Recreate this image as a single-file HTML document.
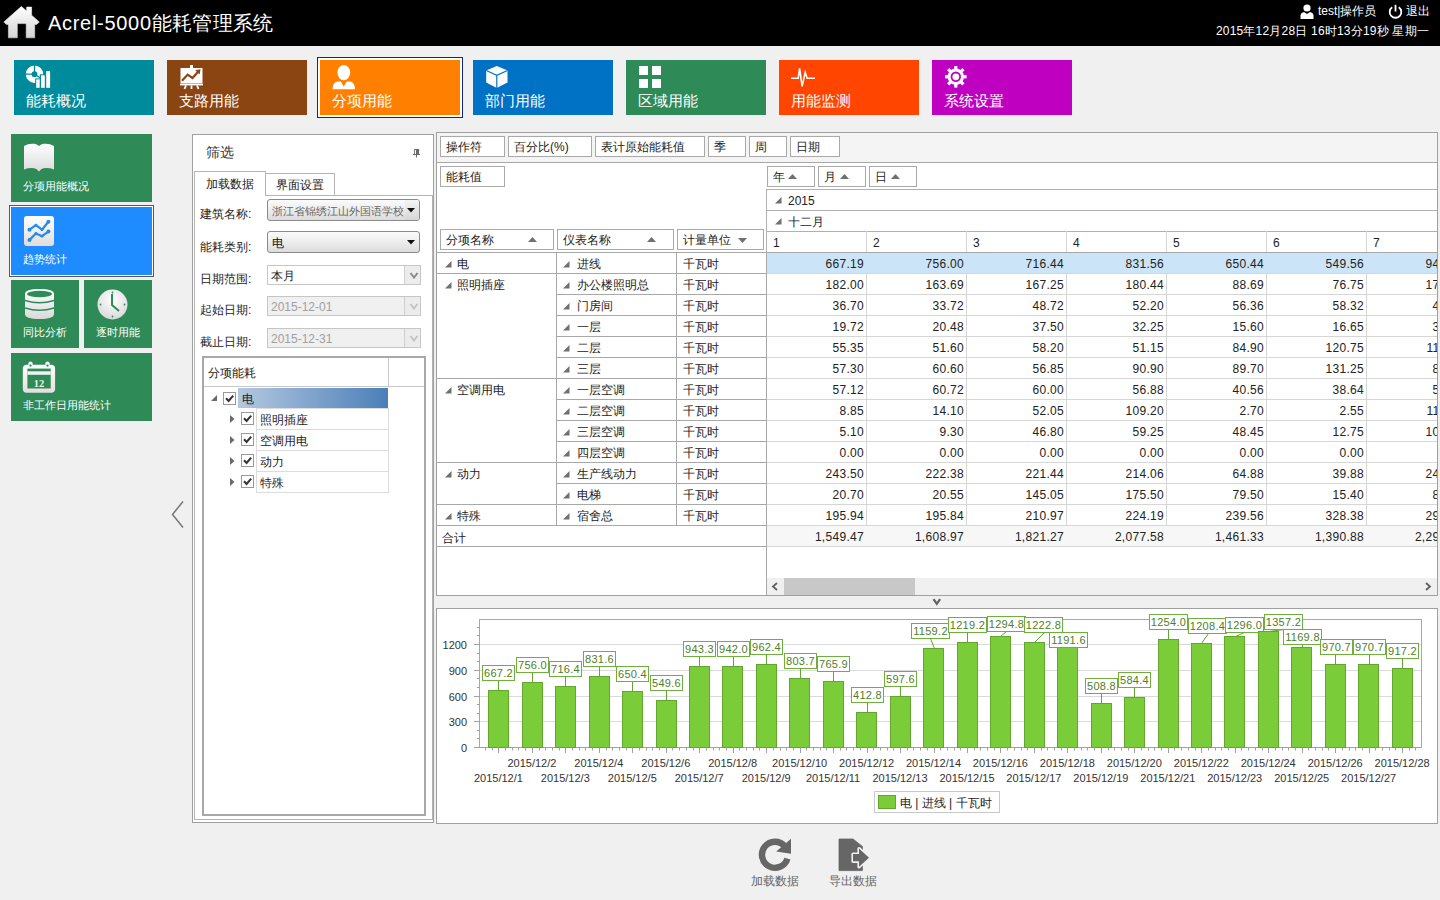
<!DOCTYPE html><html><head><meta charset="utf-8"><style>

*{box-sizing:border-box;margin:0;padding:0}
html,body{width:1440px;height:900px;overflow:hidden;background:#f0f0f0;font-family:"Liberation Sans",sans-serif;color:#222}
.a{position:absolute}
.t{position:absolute;white-space:nowrap;line-height:1}
.tile{position:absolute;width:140px;height:55px}
.tile .lbl{position:absolute;left:12px;top:32px;font-size:15px;color:#fff;line-height:17px;white-space:nowrap}
.tile svg{position:absolute;left:13px;top:5px}
.st{position:absolute;width:141px;height:68px;background:#2e8b57}
.st .lbl{position:absolute;left:12px;font-size:11px;color:#fff;line-height:12px;white-space:nowrap}
.fb{position:absolute;height:21px;border:1px solid #a9a9a9;background:#fff;font-size:12px;line-height:19px;padding-left:5px;padding-top:1px;white-space:nowrap;color:#222}
.cell{position:absolute;height:21px;font-size:12px;line-height:21px;white-space:nowrap;color:#222}

</style></head><body>
<div class="a" style="left:0;top:0;width:1440px;height:46px;background:#000"></div>
<svg class="a" style="left:0;top:0" width="46" height="46" viewBox="0 0 46 46">
<defs><linearGradient id="hg" x1="0" y1="0" x2="0" y2="1"><stop offset="0" stop-color="#fff"/><stop offset="1" stop-color="#d4d4d4"/></linearGradient></defs>
<path d="M21.3 6.5 L26.7 11 L26.7 7.1 L31.6 7.1 L31.6 15.2 L39.3 22 L36.6 24.4 L34.7 24.4 L34.7 37.8 L26.2 37.8 L26.2 23.6 L17.3 23.6 L17.3 37.8 L8.4 37.8 L8.4 24.4 L6.5 24.4 L3.8 22 Z" fill="url(#hg)" stroke="url(#hg)" stroke-width="0.6" stroke-linejoin="round"/>
</svg>
<div class="t" style="left:48px;top:13px;font-size:20px;color:#fff;letter-spacing:0.3px"><span style="letter-spacing:0.7px">Acrel-5000</span>能耗管理系统</div>
<svg class="a" style="left:1300px;top:4px" width="14" height="15" viewBox="0 0 14 15">
<circle cx="7" cy="4" r="3.6" fill="#fff"/><path d="M0.5 15 L0.5 11 Q1 8.5 4 8 L7 10 L10 8 Q13 8.5 13.5 11 L13.5 15 Z" fill="#fff"/></svg>
<div class="t" style="left:1318px;top:5px;font-size:12px;color:#fff">test|操作员</div>
<svg class="a" style="left:1388px;top:4px" width="15" height="15" viewBox="0 0 15 15">
<path d="M4.2 3.2 A5.8 5.8 0 1 0 10.8 3.2" fill="none" stroke="#fff" stroke-width="1.8"/><line x1="7.5" y1="0.8" x2="7.5" y2="7.5" stroke="#fff" stroke-width="1.8"/></svg>
<div class="t" style="left:1406px;top:5px;font-size:12px;color:#fff">退出</div>
<div class="t" style="right:11px;top:25px;font-size:12px;color:#fff;letter-spacing:0.2px">2015年12月28日 16时13分19秒 星期一</div>
<div class="tile" style="left:14px;top:60px;background:#008b9c"><svg width="26" height="24" viewBox="0 0 26 24" style="left:11px;top:5px">
<circle cx="9.5" cy="9.2" r="5.8" fill="none" stroke="#fff" stroke-width="5.8"/>
<path d="M9.5 9.2 L9.5 0 M9.5 9.2 L0 9.2 M9.5 9.2 L17 14" stroke="#008b9c" stroke-width="1.3" fill="none"/>
<rect x="10.2" y="13.4" width="4.6" height="9.6" fill="#008b9c"/><rect x="14.8" y="9.3" width="4.6" height="13.7" fill="#008b9c"/>
<rect x="11.2" y="14.4" width="3.5" height="8.4" fill="#fff"/><rect x="16" y="10.3" width="3.8" height="12.5" fill="#fff"/><rect x="21.2" y="6.1" width="3.9" height="16.7" fill="#fff"/></svg><div class="lbl">能耗概况</div></div>
<div class="tile" style="left:167px;top:60px;background:#8b4513"><svg width="24" height="25" viewBox="0 0 24 25" style="left:13px;top:5px">
<rect x="10" y="0" width="3" height="3" fill="#fff"/>
<rect x="0.5" y="3" width="22" height="15.5" fill="#fff"/>
<rect x="0" y="18.8" width="23" height="1.6" fill="#fff"/>
<path d="M2 15.8 L7.6 9.6 L12.5 13 L18.6 6.2" stroke="#8b4513" stroke-width="2.2" fill="none"/><path d="M15.2 5.2 L20.5 4.2 L19.6 9.4 Z" fill="#8b4513"/>
<path d="M6 20.4 L4.5 24 M17 20.4 L18.5 24 M11.5 20.4 L11.5 24" stroke="#fff" stroke-width="1.8"/></svg><div class="lbl">支路用能</div></div>
<div class="a" style="left:317px;top:57px;width:146px;height:61px;border:1px solid #1a237e;background:#fff"></div>
<div class="tile" style="left:320px;top:60px;background:#ff8000"><svg width="24" height="25" viewBox="0 0 24 25" style="left:12px;top:5px">
<ellipse cx="11.8" cy="7.6" rx="6.4" ry="7.6" fill="#fff"/>
<path d="M0.5 24.2 Q0.5 17.5 5.5 16.5 L8.8 16.5 L11.8 21.5 L14.8 16.5 L18 16.5 Q23 17.5 23 24.2 Z" fill="#fff"/></svg><div class="lbl">分项用能</div></div>
<div class="tile" style="left:473px;top:60px;background:#0072c6"><svg width="24" height="25" viewBox="0 0 24 25" style="left:13px;top:5px">
<path d="M10.8 1 L21.5 5.5 L21.5 17.5 L10.8 23 L0.2 17.5 L0.2 5.5 Z" fill="#fff"/>
<path d="M0.2 5.5 L10.8 10.3 L21.5 5.5 M10.8 10.3 L10.8 23" stroke="#0072c6" stroke-width="1.2" fill="none"/></svg><div class="lbl">部门用能</div></div>
<div class="tile" style="left:626px;top:60px;background:#2e8b57"><svg width="24" height="24" viewBox="0 0 24 24" style="left:13px;top:6px">
<rect x="0" y="0" width="9" height="9" fill="#fff"/><rect x="13" y="0" width="9" height="9" fill="#fff"/>
<rect x="0" y="13" width="9" height="9" fill="#fff"/><rect x="13" y="13" width="9" height="9" fill="#fff"/></svg><div class="lbl">区域用能</div></div>
<div class="tile" style="left:779px;top:60px;background:#ff4500"><svg width="26" height="24" viewBox="0 0 26 24" style="left:12px;top:6px">
<path d="M0 12.3 L7.2 12.3 L8.6 2.3 L11.1 20.4 L14.2 6.5 L16.2 12.3 L24 12.3" stroke="#fff" stroke-width="1.6" fill="none"/></svg><div class="lbl">用能监测</div></div>
<div class="tile" style="left:932px;top:60px;background:#c000c0"><svg width="22" height="22" viewBox="0 0 22 22" style="left:13px;top:6px">
<g fill="#fff"><circle cx="10.8" cy="10.8" r="8.2"/><rect x="9.2" y="0" width="3.2" height="21.6" transform="rotate(0 10.8 10.8)"/><rect x="9.2" y="0" width="3.2" height="21.6" transform="rotate(45 10.8 10.8)"/><rect x="9.2" y="0" width="3.2" height="21.6" transform="rotate(90 10.8 10.8)"/><rect x="9.2" y="0" width="3.2" height="21.6" transform="rotate(135 10.8 10.8)"/></g>
<circle cx="10.8" cy="10.8" r="5.2" fill="#c000c0"/><circle cx="10.8" cy="10.8" r="3.4" fill="#fff"/></svg><div class="lbl">系统设置</div></div>
<div class="st" style="left:11px;top:134px;width:141px;background:#2e8b57"><svg class="a" style="left:12px;top:9px" width="32" height="30" viewBox="0 0 32 30">
<defs><linearGradient id="wg" x1="0" y1="0" x2="0" y2="1"><stop offset="0" stop-color="#fff"/><stop offset="1" stop-color="#dcdcdc"/></linearGradient></defs>
<path d="M1 3 Q6 0 11.4 0.8 Q14 1.2 16 3 Q18 1.2 20.5 0.8 Q26 0 31 3 L31 26.5 Q26 24.5 20.5 25.2 Q18 25.6 16 28.4 Q14 25.6 11.4 25.2 Q6 24.5 1 26.5 Z" fill="url(#wg)"/></svg><div class="lbl" style="top:46px">分项用能概况</div></div>
<div class="a" style="left:9px;top:205px;width:145px;height:72px;border:1px solid #5a5a5a;background:#fff"></div>
<div class="st" style="left:11px;top:207px;width:141px;background:#1e8cff"><svg class="a" style="left:13px;top:9px" width="31" height="31" viewBox="0 0 31 31">
<defs><linearGradient id="tg" x1="0" y1="0" x2="0" y2="1"><stop offset="0" stop-color="#fff"/><stop offset="1" stop-color="#e2dcd8"/></linearGradient></defs>
<rect x="0" y="0" width="30" height="30" rx="3" fill="url(#tg)"/>
<path d="M5.5 13.7 L11.9 9.2 L18 13.7 L24.4 5.8" stroke="#1e8cf0" stroke-width="2.2" fill="none" stroke-linejoin="round"/>
<path d="M5.5 23.9 L11.9 17.5 L18 20.2 L24.4 15.6" stroke="#1e8cf0" stroke-width="2.2" fill="none" stroke-linejoin="round"/>
<circle cx="5.5" cy="13.7" r="2" fill="#1e8cf0"/><circle cx="24.4" cy="5.8" r="2" fill="#1e8cf0"/><circle cx="5.5" cy="23.9" r="2" fill="#1e8cf0"/><circle cx="24.4" cy="15.6" r="2" fill="#1e8cf0"/>
<circle cx="11.9" cy="9.2" r="1.4" fill="#1e8cf0"/><circle cx="18" cy="13.7" r="1.4" fill="#1e8cf0"/><circle cx="11.9" cy="17.5" r="1.4" fill="#1e8cf0"/><circle cx="18" cy="20.2" r="1.4" fill="#1e8cf0"/></svg><div class="lbl" style="top:46px">趋势统计</div></div>
<div class="st" style="left:11px;top:280px;width:68px;background:#2e8b57"><svg class="a" style="left:14px;top:9px" width="30" height="31" viewBox="0 0 30 31">
<defs><linearGradient id="dg" x1="0" y1="0" x2="0" y2="1"><stop offset="0" stop-color="#fff"/><stop offset="1" stop-color="#d9d9d9"/></linearGradient></defs>
<path d="M0 5 Q0 0 14.5 0 Q29 0 29 5 L29 25 Q29 30 14.5 30 Q0 30 0 25 Z" fill="url(#dg)"/>
<ellipse cx="14.5" cy="5" rx="12.5" ry="3.2" fill="#2e8b57"/>
<path d="M0 11.5 Q14.5 16 29 11.5 M0 19 Q14.5 23.5 29 19" stroke="#2e8b57" stroke-width="1.6" fill="none"/></svg><div class="lbl" style="top:46px">同比分析</div></div>
<div class="st" style="left:84px;top:280px;width:68px;background:#2e8b57"><svg class="a" style="left:13px;top:9px" width="31" height="31" viewBox="0 0 31 31">
<defs><radialGradient id="cg" cx="0.5" cy="0.35" r="0.7"><stop offset="0" stop-color="#fff"/><stop offset="1" stop-color="#d6d6d6"/></radialGradient></defs>
<circle cx="15.5" cy="15.5" r="15" fill="url(#cg)"/>
<path d="M15 5 L15 16 L22 22" stroke="#2e8b57" stroke-width="2" fill="none"/>
<circle cx="15.5" cy="3.5" r="0.9" fill="#2e8b57"/><circle cx="27.5" cy="15.5" r="0.9" fill="#2e8b57"/><circle cx="15.5" cy="27.5" r="0.9" fill="#2e8b57"/><circle cx="3.5" cy="15.5" r="0.9" fill="#2e8b57"/></svg><div class="lbl" style="top:46px">逐时用能</div></div>
<div class="st" style="left:11px;top:353px;width:141px;background:#2e8b57"><svg class="a" style="left:11px;top:7px" width="34" height="34" viewBox="0 0 34 34">
<defs><linearGradient id="kg" x1="0" y1="0" x2="0" y2="1"><stop offset="0" stop-color="#fff"/><stop offset="1" stop-color="#e6dede"/></linearGradient></defs>
<rect x="0.8" y="4.8" width="32.3" height="28" rx="4" fill="url(#kg)"/>
<rect x="5.4" y="8.6" width="23.3" height="19.9" fill="#2e8b57"/>
<rect x="5.4" y="11.3" width="23.3" height="3.5" fill="#f2f2f2"/>
<rect x="6.3" y="1.4" width="4.4" height="6.5" rx="2.2" fill="#f4f4f4"/><rect x="23.3" y="1.4" width="4.4" height="6.5" rx="2.2" fill="#f4f4f4"/>
<circle cx="8.5" cy="5.6" r="1.1" fill="#2e8b57"/><circle cx="25.5" cy="5.6" r="1.1" fill="#2e8b57"/>
<text x="17" y="27" font-size="10.5" font-family="Liberation Serif" font-weight="bold" text-anchor="middle" fill="#e8f4e8">12</text></svg><div class="lbl" style="top:46px">非工作日用能统计</div></div>
<svg class="a" style="left:170px;top:500px" width="16" height="29" viewBox="0 0 16 29"><path d="M13 1.5 L2.5 14.5 L13 27.5" stroke="#777" stroke-width="1.5" fill="none"/></svg>
<div class="a" style="left:192px;top:134px;width:242px;height:689px;border:1px solid #a0a0a0;background:#fff"></div>
<div class="t" style="left:206px;top:145px;font-size:14px;color:#333">筛选</div>
<svg class="a" style="left:413px;top:149px" width="8" height="9" viewBox="0 0 8 9"><rect x="1.1" y="0" width="5" height="5.4" fill="#6a6a6a"/><rect x="2" y="1" width="1" height="4" fill="#fff"/><rect x="0" y="5" width="7" height="1" fill="#6a6a6a"/><rect x="3" y="6" width="1" height="2.5" fill="#6a6a6a"/></svg>
<div class="a" style="left:194px;top:195px;width:239px;height:625px;border:1px solid #b4b4b4;background:#fff"></div>
<div class="a" style="left:194px;top:171px;width:72px;height:25px;border:1px solid #b4b4b4;border-bottom:none;background:#fff"></div>
<div class="t" style="left:206px;top:178px;font-size:12px;color:#222">加载数据</div>
<div class="a" style="left:265px;top:173px;width:70px;height:22px;border:1px solid #b4b4b4;border-bottom:none;background:#fff"></div>
<div class="t" style="left:276px;top:179px;font-size:12px;color:#222">界面设置</div>
<div class="t" style="left:200px;top:208px;font-size:12px;color:#222">建筑名称:</div>
<div class="t" style="left:200px;top:241px;font-size:12px;color:#222">能耗类别:</div>
<div class="t" style="left:200px;top:273px;font-size:12px;color:#222">日期范围:</div>
<div class="t" style="left:200px;top:304px;font-size:12px;color:#222">起始日期:</div>
<div class="t" style="left:200px;top:336px;font-size:12px;color:#222">截止日期:</div>
<div class="a" style="left:267px;top:199px;width:153px;height:22px;border:1px solid #8a8a8a;border-radius:3px;background:linear-gradient(#fbfbfb,#f0f0f0 40%,#dcdcdc 100%);overflow:hidden"><div class="t" style="left:4px;top:6px;font-size:11px;color:#666">浙江省锦绣江山外国语学校</div><div class="a" style="right:0;top:0;width:14px;height:20px;background:linear-gradient(#f4f4f4,#d6d6d6)"></div><svg class="a" style="right:4px;top:8px" width="8" height="5" viewBox="0 0 8 5"><path d="M0 0 L8 0 L4 4.5Z" fill="#111"/></svg></div>
<div class="a" style="left:267px;top:231px;width:153px;height:22px;border:1px solid #8a8a8a;border-radius:3px;background:linear-gradient(#fbfbfb,#f0f0f0 40%,#dcdcdc 100%);overflow:hidden"><div class="t" style="left:4px;top:5px;font-size:12px;color:#111">电</div><svg class="a" style="right:4px;top:8px" width="8" height="5" viewBox="0 0 8 5"><path d="M0 0 L8 0 L4 4.5Z" fill="#111"/></svg></div>
<div class="a" style="left:267px;top:265px;width:154px;height:20px;border:1px solid #c6c6c6;background:#fff"><div class="t" style="left:3px;top:4px;font-size:12px;color:#222">本月</div><div class="a" style="left:136px;top:0;width:16px;height:18px;background:#ececec;border-left:1px solid #d0d0d0"></div><svg class="a" style="left:141px;top:6px" width="10" height="7" viewBox="0 0 10 7"><path d="M1.5 1 L5 5.5 L8.5 1" stroke="#8a8a8a" stroke-width="2" fill="none"/></svg></div>
<div class="a" style="left:267px;top:296px;width:154px;height:20px;border:1px solid #c6c6c6;background:#f0f0f0"><div class="t" style="left:3px;top:4px;font-size:12px;color:#a0a0a0">2015-12-01</div><div class="a" style="left:136px;top:0;width:16px;height:18px;background:#ececec;border-left:1px solid #d0d0d0"></div><svg class="a" style="left:141px;top:6px" width="10" height="7" viewBox="0 0 10 7"><path d="M1.5 1 L5 5.5 L8.5 1" stroke="#c4c4c4" stroke-width="2" fill="none"/></svg></div>
<div class="a" style="left:267px;top:328px;width:154px;height:20px;border:1px solid #c6c6c6;background:#f0f0f0"><div class="t" style="left:3px;top:4px;font-size:12px;color:#a0a0a0">2015-12-31</div><div class="a" style="left:136px;top:0;width:16px;height:18px;background:#ececec;border-left:1px solid #d0d0d0"></div><svg class="a" style="left:141px;top:6px" width="10" height="7" viewBox="0 0 10 7"><path d="M1.5 1 L5 5.5 L8.5 1" stroke="#c4c4c4" stroke-width="2" fill="none"/></svg></div>
<div class="a" style="left:202px;top:356px;width:224px;height:460px;border:2px solid #a8a8a8;background:#fff"></div>
<div class="a" style="left:204px;top:386px;width:220px;height:1px;background:#c8c8c8"></div>
<div class="a" style="left:388px;top:358px;width:1px;height:29px;background:#c8c8c8"></div>
<div class="t" style="left:208px;top:367px;font-size:12px;color:#222">分项能耗</div>
<div class="a" style="left:238px;top:388px;width:150px;height:20px;background:linear-gradient(90deg,#b4c8e0,#4a7fb8)"></div>
<svg class="a" style="left:211px;top:395px" width="7" height="7" viewBox="0 0 7 7"><path d="M6 0 L6 6 L0 6Z" fill="#6a6a6a"/></svg>
<div class="a" style="left:223px;top:392px;width:13px;height:13px;border:1px solid #9a9a9a;background:#fff"></div><svg class="a" style="left:225px;top:394px" width="9" height="9" viewBox="0 0 9 9"><path d="M1 4.3 L3.6 7 L8.2 1.6" stroke="#333" stroke-width="2" fill="none"/></svg>
<div class="t" style="left:242px;top:393px;font-size:12px;color:#222">电</div>
<div class="a" style="left:256px;top:408px;width:133px;height:22px;border:1px solid #dcdcdc;background:#fff"></div>
<svg class="a" style="left:230px;top:415px" width="5" height="8" viewBox="0 0 5 8"><path d="M0 0 L4.5 4 L0 8Z" fill="#6a6a6a"/></svg>
<div class="a" style="left:241px;top:412px;width:13px;height:13px;border:1px solid #9a9a9a;background:#fff"></div><svg class="a" style="left:243px;top:414px" width="9" height="9" viewBox="0 0 9 9"><path d="M1 4.3 L3.6 7 L8.2 1.6" stroke="#333" stroke-width="2" fill="none"/></svg>
<div class="t" style="left:260px;top:414px;font-size:12px;color:#222">照明插座</div>
<div class="a" style="left:256px;top:429px;width:133px;height:22px;border:1px solid #dcdcdc;background:#fff"></div>
<svg class="a" style="left:230px;top:436px" width="5" height="8" viewBox="0 0 5 8"><path d="M0 0 L4.5 4 L0 8Z" fill="#6a6a6a"/></svg>
<div class="a" style="left:241px;top:433px;width:13px;height:13px;border:1px solid #9a9a9a;background:#fff"></div><svg class="a" style="left:243px;top:435px" width="9" height="9" viewBox="0 0 9 9"><path d="M1 4.3 L3.6 7 L8.2 1.6" stroke="#333" stroke-width="2" fill="none"/></svg>
<div class="t" style="left:260px;top:435px;font-size:12px;color:#222">空调用电</div>
<div class="a" style="left:256px;top:450px;width:133px;height:22px;border:1px solid #dcdcdc;background:#fff"></div>
<svg class="a" style="left:230px;top:457px" width="5" height="8" viewBox="0 0 5 8"><path d="M0 0 L4.5 4 L0 8Z" fill="#6a6a6a"/></svg>
<div class="a" style="left:241px;top:454px;width:13px;height:13px;border:1px solid #9a9a9a;background:#fff"></div><svg class="a" style="left:243px;top:456px" width="9" height="9" viewBox="0 0 9 9"><path d="M1 4.3 L3.6 7 L8.2 1.6" stroke="#333" stroke-width="2" fill="none"/></svg>
<div class="t" style="left:260px;top:456px;font-size:12px;color:#222">动力</div>
<div class="a" style="left:256px;top:471px;width:133px;height:22px;border:1px solid #dcdcdc;background:#fff"></div>
<svg class="a" style="left:230px;top:478px" width="5" height="8" viewBox="0 0 5 8"><path d="M0 0 L4.5 4 L0 8Z" fill="#6a6a6a"/></svg>
<div class="a" style="left:241px;top:475px;width:13px;height:13px;border:1px solid #9a9a9a;background:#fff"></div><svg class="a" style="left:243px;top:477px" width="9" height="9" viewBox="0 0 9 9"><path d="M1 4.3 L3.6 7 L8.2 1.6" stroke="#333" stroke-width="2" fill="none"/></svg>
<div class="t" style="left:260px;top:477px;font-size:12px;color:#222">特殊</div>
<div class="a" style="left:436px;top:132px;width:1002px;height:464px;border:1px solid #a0a0a0;background:#fff"></div>
<div class="a" style="left:437px;top:133px;width:1000px;height:30px;background:#f4f4f4;border-bottom:1px solid #a8a8a8"></div>
<div class="fb" style="left:440px;top:136px;width:65px">操作符</div>
<div class="fb" style="left:508px;top:136px;width:84px">百分比(%)</div>
<div class="fb" style="left:595px;top:136px;width:110px">表计原始能耗值</div>
<div class="fb" style="left:708px;top:136px;width:38px">季</div>
<div class="fb" style="left:749px;top:136px;width:38px">周</div>
<div class="fb" style="left:790px;top:136px;width:50px">日期</div>
<div class="fb" style="left:440px;top:166px;width:65px">能耗值</div>
<div class="fb" style="left:767px;top:166px;width:48px">年</div><svg class="a" style="left:788px;top:174px" width="9" height="5" viewBox="0 0 9 5"><path d="M0 5 L4.5 0 L9 5Z" fill="#707070"/></svg>
<div class="fb" style="left:818px;top:166px;width:48px">月</div><svg class="a" style="left:840px;top:174px" width="9" height="5" viewBox="0 0 9 5"><path d="M0 5 L4.5 0 L9 5Z" fill="#707070"/></svg>
<div class="fb" style="left:869px;top:166px;width:48px">日</div><svg class="a" style="left:891px;top:174px" width="9" height="5" viewBox="0 0 9 5"><path d="M0 5 L4.5 0 L9 5Z" fill="#707070"/></svg>
<div class="fb" style="left:440px;top:229px;width:114px">分项名称</div><svg class="a" style="left:528px;top:237px" width="9" height="5" viewBox="0 0 9 5"><path d="M0 5 L4.5 0 L9 5Z" fill="#707070"/></svg>
<div class="fb" style="left:557px;top:229px;width:117px">仪表名称</div><svg class="a" style="left:647px;top:237px" width="9" height="5" viewBox="0 0 9 5"><path d="M0 5 L4.5 0 L9 5Z" fill="#707070"/></svg>
<div class="fb" style="left:677px;top:229px;width:87px">计量单位</div><svg class="a" style="left:738px;top:238px" width="9" height="5" viewBox="0 0 9 5"><path d="M0 0 L4.5 5 L9 0Z" fill="#707070"/></svg>
<div class="a" style="left:766px;top:189px;width:671px;height:1px;background:#b0b0b0"></div>
<div class="a" style="left:766px;top:210px;width:671px;height:1px;background:#b0b0b0"></div>
<div class="a" style="left:766px;top:231px;width:671px;height:1px;background:#b0b0b0"></div>
<div class="a" style="left:766px;top:189px;width:1px;height:63px;background:#b0b0b0"></div>
<svg class="a" style="left:775px;top:197px" width="7" height="7" viewBox="0 0 7 7"><path d="M6.5 0 L6.5 6.5 L0 6.5Z" fill="#707070"/></svg><div class="t" style="left:788px;top:195px;font-size:12px">2015</div>
<svg class="a" style="left:775px;top:218px" width="7" height="7" viewBox="0 0 7 7"><path d="M6.5 0 L6.5 6.5 L0 6.5Z" fill="#707070"/></svg><div class="t" style="left:788px;top:216px;font-size:12px">十二月</div>
<div class="t" style="left:773px;top:237px;font-size:12px">1</div>
<div class="a" style="left:866px;top:231px;width:1px;height:315px;background:#d6d6d6"></div>
<div class="t" style="left:873px;top:237px;font-size:12px">2</div>
<div class="a" style="left:966px;top:231px;width:1px;height:315px;background:#d6d6d6"></div>
<div class="t" style="left:973px;top:237px;font-size:12px">3</div>
<div class="a" style="left:1066px;top:231px;width:1px;height:315px;background:#d6d6d6"></div>
<div class="t" style="left:1073px;top:237px;font-size:12px">4</div>
<div class="a" style="left:1166px;top:231px;width:1px;height:315px;background:#d6d6d6"></div>
<div class="t" style="left:1173px;top:237px;font-size:12px">5</div>
<div class="a" style="left:1266px;top:231px;width:1px;height:315px;background:#d6d6d6"></div>
<div class="t" style="left:1273px;top:237px;font-size:12px">6</div>
<div class="a" style="left:1366px;top:231px;width:1px;height:315px;background:#d6d6d6"></div>
<div class="t" style="left:1373px;top:237px;font-size:12px">7</div>
<div class="a" style="left:437px;top:252px;width:1000px;height:1px;background:#a8a8a8"></div>
<div class="a" style="left:767px;top:253px;width:670px;height:20px;background:#cce4f7"></div>
<svg class="a" style="left:445px;top:261px" width="7" height="7" viewBox="0 0 7 7"><path d="M6.5 0 L6.5 6.5 L0 6.5Z" fill="#707070"/></svg><div class="t" style="left:457px;top:258px;font-size:12px">电</div>
<svg class="a" style="left:563px;top:261px" width="7" height="7" viewBox="0 0 7 7"><path d="M6.5 0 L6.5 6.5 L0 6.5Z" fill="#707070"/></svg><div class="t" style="left:577px;top:258px;font-size:12px">进线</div>
<div class="t" style="left:683px;top:258px;font-size:12px">千瓦时</div>
<div class="a" style="left:437px;top:273px;width:329px;height:1px;background:#a8a8a8"></div>
<div class="a" style="left:766px;top:273px;width:671px;height:1px;background:#d6d6d6"></div>
<svg class="a" style="left:445px;top:282px" width="7" height="7" viewBox="0 0 7 7"><path d="M6.5 0 L6.5 6.5 L0 6.5Z" fill="#707070"/></svg><div class="t" style="left:457px;top:279px;font-size:12px">照明插座</div>
<svg class="a" style="left:563px;top:282px" width="7" height="7" viewBox="0 0 7 7"><path d="M6.5 0 L6.5 6.5 L0 6.5Z" fill="#707070"/></svg><div class="t" style="left:577px;top:279px;font-size:12px">办公楼照明总</div>
<div class="t" style="left:683px;top:279px;font-size:12px">千瓦时</div>
<div class="a" style="left:556px;top:294px;width:210px;height:1px;background:#a8a8a8"></div>
<div class="a" style="left:766px;top:294px;width:671px;height:1px;background:#d6d6d6"></div>
<svg class="a" style="left:563px;top:303px" width="7" height="7" viewBox="0 0 7 7"><path d="M6.5 0 L6.5 6.5 L0 6.5Z" fill="#707070"/></svg><div class="t" style="left:577px;top:300px;font-size:12px">门房间</div>
<div class="t" style="left:683px;top:300px;font-size:12px">千瓦时</div>
<div class="a" style="left:556px;top:315px;width:210px;height:1px;background:#a8a8a8"></div>
<div class="a" style="left:766px;top:315px;width:671px;height:1px;background:#d6d6d6"></div>
<svg class="a" style="left:563px;top:324px" width="7" height="7" viewBox="0 0 7 7"><path d="M6.5 0 L6.5 6.5 L0 6.5Z" fill="#707070"/></svg><div class="t" style="left:577px;top:321px;font-size:12px">一层</div>
<div class="t" style="left:683px;top:321px;font-size:12px">千瓦时</div>
<div class="a" style="left:556px;top:336px;width:210px;height:1px;background:#a8a8a8"></div>
<div class="a" style="left:766px;top:336px;width:671px;height:1px;background:#d6d6d6"></div>
<svg class="a" style="left:563px;top:345px" width="7" height="7" viewBox="0 0 7 7"><path d="M6.5 0 L6.5 6.5 L0 6.5Z" fill="#707070"/></svg><div class="t" style="left:577px;top:342px;font-size:12px">二层</div>
<div class="t" style="left:683px;top:342px;font-size:12px">千瓦时</div>
<div class="a" style="left:556px;top:357px;width:210px;height:1px;background:#a8a8a8"></div>
<div class="a" style="left:766px;top:357px;width:671px;height:1px;background:#d6d6d6"></div>
<svg class="a" style="left:563px;top:366px" width="7" height="7" viewBox="0 0 7 7"><path d="M6.5 0 L6.5 6.5 L0 6.5Z" fill="#707070"/></svg><div class="t" style="left:577px;top:363px;font-size:12px">三层</div>
<div class="t" style="left:683px;top:363px;font-size:12px">千瓦时</div>
<div class="a" style="left:437px;top:378px;width:329px;height:1px;background:#a8a8a8"></div>
<div class="a" style="left:766px;top:378px;width:671px;height:1px;background:#d6d6d6"></div>
<svg class="a" style="left:445px;top:387px" width="7" height="7" viewBox="0 0 7 7"><path d="M6.5 0 L6.5 6.5 L0 6.5Z" fill="#707070"/></svg><div class="t" style="left:457px;top:384px;font-size:12px">空调用电</div>
<svg class="a" style="left:563px;top:387px" width="7" height="7" viewBox="0 0 7 7"><path d="M6.5 0 L6.5 6.5 L0 6.5Z" fill="#707070"/></svg><div class="t" style="left:577px;top:384px;font-size:12px">一层空调</div>
<div class="t" style="left:683px;top:384px;font-size:12px">千瓦时</div>
<div class="a" style="left:556px;top:399px;width:210px;height:1px;background:#a8a8a8"></div>
<div class="a" style="left:766px;top:399px;width:671px;height:1px;background:#d6d6d6"></div>
<svg class="a" style="left:563px;top:408px" width="7" height="7" viewBox="0 0 7 7"><path d="M6.5 0 L6.5 6.5 L0 6.5Z" fill="#707070"/></svg><div class="t" style="left:577px;top:405px;font-size:12px">二层空调</div>
<div class="t" style="left:683px;top:405px;font-size:12px">千瓦时</div>
<div class="a" style="left:556px;top:420px;width:210px;height:1px;background:#a8a8a8"></div>
<div class="a" style="left:766px;top:420px;width:671px;height:1px;background:#d6d6d6"></div>
<svg class="a" style="left:563px;top:429px" width="7" height="7" viewBox="0 0 7 7"><path d="M6.5 0 L6.5 6.5 L0 6.5Z" fill="#707070"/></svg><div class="t" style="left:577px;top:426px;font-size:12px">三层空调</div>
<div class="t" style="left:683px;top:426px;font-size:12px">千瓦时</div>
<div class="a" style="left:556px;top:441px;width:210px;height:1px;background:#a8a8a8"></div>
<div class="a" style="left:766px;top:441px;width:671px;height:1px;background:#d6d6d6"></div>
<svg class="a" style="left:563px;top:450px" width="7" height="7" viewBox="0 0 7 7"><path d="M6.5 0 L6.5 6.5 L0 6.5Z" fill="#707070"/></svg><div class="t" style="left:577px;top:447px;font-size:12px">四层空调</div>
<div class="t" style="left:683px;top:447px;font-size:12px">千瓦时</div>
<div class="a" style="left:437px;top:462px;width:329px;height:1px;background:#a8a8a8"></div>
<div class="a" style="left:766px;top:462px;width:671px;height:1px;background:#d6d6d6"></div>
<svg class="a" style="left:445px;top:471px" width="7" height="7" viewBox="0 0 7 7"><path d="M6.5 0 L6.5 6.5 L0 6.5Z" fill="#707070"/></svg><div class="t" style="left:457px;top:468px;font-size:12px">动力</div>
<svg class="a" style="left:563px;top:471px" width="7" height="7" viewBox="0 0 7 7"><path d="M6.5 0 L6.5 6.5 L0 6.5Z" fill="#707070"/></svg><div class="t" style="left:577px;top:468px;font-size:12px">生产线动力</div>
<div class="t" style="left:683px;top:468px;font-size:12px">千瓦时</div>
<div class="a" style="left:556px;top:483px;width:210px;height:1px;background:#a8a8a8"></div>
<div class="a" style="left:766px;top:483px;width:671px;height:1px;background:#d6d6d6"></div>
<svg class="a" style="left:563px;top:492px" width="7" height="7" viewBox="0 0 7 7"><path d="M6.5 0 L6.5 6.5 L0 6.5Z" fill="#707070"/></svg><div class="t" style="left:577px;top:489px;font-size:12px">电梯</div>
<div class="t" style="left:683px;top:489px;font-size:12px">千瓦时</div>
<div class="a" style="left:437px;top:504px;width:329px;height:1px;background:#a8a8a8"></div>
<div class="a" style="left:766px;top:504px;width:671px;height:1px;background:#d6d6d6"></div>
<svg class="a" style="left:445px;top:513px" width="7" height="7" viewBox="0 0 7 7"><path d="M6.5 0 L6.5 6.5 L0 6.5Z" fill="#707070"/></svg><div class="t" style="left:457px;top:510px;font-size:12px">特殊</div>
<svg class="a" style="left:563px;top:513px" width="7" height="7" viewBox="0 0 7 7"><path d="M6.5 0 L6.5 6.5 L0 6.5Z" fill="#707070"/></svg><div class="t" style="left:577px;top:510px;font-size:12px">宿舍总</div>
<div class="t" style="left:683px;top:510px;font-size:12px">千瓦时</div>
<div class="a" style="left:437px;top:525px;width:329px;height:1px;background:#a8a8a8"></div><div class="a" style="left:766px;top:525px;width:671px;height:1px;background:#d6d6d6"></div>
<div class="a" style="left:767px;top:526px;width:670px;height:20px;background:#f7f7f7"></div>
<div class="t" style="left:442px;top:532px;font-size:12px">合计</div>
<div class="a" style="left:437px;top:546px;width:329px;height:1px;background:#a8a8a8"></div><div class="a" style="left:766px;top:546px;width:671px;height:1px;background:#d6d6d6"></div>
<div class="a" style="left:556px;top:252px;width:1px;height:273px;background:#a8a8a8"></div>
<div class="a" style="left:676px;top:252px;width:1px;height:273px;background:#a8a8a8"></div>
<div class="a" style="left:766px;top:252px;width:1px;height:343px;background:#a8a8a8"></div>
<div class="a" style="left:767px;top:252px;width:670px;height:295px;overflow:hidden">
<div class="t" style="left:-23px;width:120px;text-align:right;top:6px;font-size:12px;letter-spacing:0.3px">667.19</div>
<div class="t" style="left:77px;width:120px;text-align:right;top:6px;font-size:12px;letter-spacing:0.3px">756.00</div>
<div class="t" style="left:177px;width:120px;text-align:right;top:6px;font-size:12px;letter-spacing:0.3px">716.44</div>
<div class="t" style="left:277px;width:120px;text-align:right;top:6px;font-size:12px;letter-spacing:0.3px">831.56</div>
<div class="t" style="left:377px;width:120px;text-align:right;top:6px;font-size:12px;letter-spacing:0.3px">650.44</div>
<div class="t" style="left:477px;width:120px;text-align:right;top:6px;font-size:12px;letter-spacing:0.3px">549.56</div>
<div class="t" style="left:577px;width:120px;text-align:right;top:6px;font-size:12px;letter-spacing:0.3px">943.30</div>
<div class="t" style="left:-23px;width:120px;text-align:right;top:27px;font-size:12px;letter-spacing:0.3px">182.00</div>
<div class="t" style="left:77px;width:120px;text-align:right;top:27px;font-size:12px;letter-spacing:0.3px">163.69</div>
<div class="t" style="left:177px;width:120px;text-align:right;top:27px;font-size:12px;letter-spacing:0.3px">167.25</div>
<div class="t" style="left:277px;width:120px;text-align:right;top:27px;font-size:12px;letter-spacing:0.3px">180.44</div>
<div class="t" style="left:377px;width:120px;text-align:right;top:27px;font-size:12px;letter-spacing:0.3px">88.69</div>
<div class="t" style="left:477px;width:120px;text-align:right;top:27px;font-size:12px;letter-spacing:0.3px">76.75</div>
<div class="t" style="left:577px;width:120px;text-align:right;top:27px;font-size:12px;letter-spacing:0.3px">175.50</div>
<div class="t" style="left:-23px;width:120px;text-align:right;top:48px;font-size:12px;letter-spacing:0.3px">36.70</div>
<div class="t" style="left:77px;width:120px;text-align:right;top:48px;font-size:12px;letter-spacing:0.3px">33.72</div>
<div class="t" style="left:177px;width:120px;text-align:right;top:48px;font-size:12px;letter-spacing:0.3px">48.72</div>
<div class="t" style="left:277px;width:120px;text-align:right;top:48px;font-size:12px;letter-spacing:0.3px">52.20</div>
<div class="t" style="left:377px;width:120px;text-align:right;top:48px;font-size:12px;letter-spacing:0.3px">56.36</div>
<div class="t" style="left:477px;width:120px;text-align:right;top:48px;font-size:12px;letter-spacing:0.3px">58.32</div>
<div class="t" style="left:577px;width:120px;text-align:right;top:48px;font-size:12px;letter-spacing:0.3px">45.20</div>
<div class="t" style="left:-23px;width:120px;text-align:right;top:69px;font-size:12px;letter-spacing:0.3px">19.72</div>
<div class="t" style="left:77px;width:120px;text-align:right;top:69px;font-size:12px;letter-spacing:0.3px">20.48</div>
<div class="t" style="left:177px;width:120px;text-align:right;top:69px;font-size:12px;letter-spacing:0.3px">37.50</div>
<div class="t" style="left:277px;width:120px;text-align:right;top:69px;font-size:12px;letter-spacing:0.3px">32.25</div>
<div class="t" style="left:377px;width:120px;text-align:right;top:69px;font-size:12px;letter-spacing:0.3px">15.60</div>
<div class="t" style="left:477px;width:120px;text-align:right;top:69px;font-size:12px;letter-spacing:0.3px">16.65</div>
<div class="t" style="left:577px;width:120px;text-align:right;top:69px;font-size:12px;letter-spacing:0.3px">35.10</div>
<div class="t" style="left:-23px;width:120px;text-align:right;top:90px;font-size:12px;letter-spacing:0.3px">55.35</div>
<div class="t" style="left:77px;width:120px;text-align:right;top:90px;font-size:12px;letter-spacing:0.3px">51.60</div>
<div class="t" style="left:177px;width:120px;text-align:right;top:90px;font-size:12px;letter-spacing:0.3px">58.20</div>
<div class="t" style="left:277px;width:120px;text-align:right;top:90px;font-size:12px;letter-spacing:0.3px">51.15</div>
<div class="t" style="left:377px;width:120px;text-align:right;top:90px;font-size:12px;letter-spacing:0.3px">84.90</div>
<div class="t" style="left:477px;width:120px;text-align:right;top:90px;font-size:12px;letter-spacing:0.3px">120.75</div>
<div class="t" style="left:577px;width:120px;text-align:right;top:90px;font-size:12px;letter-spacing:0.3px">115.05</div>
<div class="t" style="left:-23px;width:120px;text-align:right;top:111px;font-size:12px;letter-spacing:0.3px">57.30</div>
<div class="t" style="left:77px;width:120px;text-align:right;top:111px;font-size:12px;letter-spacing:0.3px">60.60</div>
<div class="t" style="left:177px;width:120px;text-align:right;top:111px;font-size:12px;letter-spacing:0.3px">56.85</div>
<div class="t" style="left:277px;width:120px;text-align:right;top:111px;font-size:12px;letter-spacing:0.3px">90.90</div>
<div class="t" style="left:377px;width:120px;text-align:right;top:111px;font-size:12px;letter-spacing:0.3px">89.70</div>
<div class="t" style="left:477px;width:120px;text-align:right;top:111px;font-size:12px;letter-spacing:0.3px">131.25</div>
<div class="t" style="left:577px;width:120px;text-align:right;top:111px;font-size:12px;letter-spacing:0.3px">85.35</div>
<div class="t" style="left:-23px;width:120px;text-align:right;top:132px;font-size:12px;letter-spacing:0.3px">57.12</div>
<div class="t" style="left:77px;width:120px;text-align:right;top:132px;font-size:12px;letter-spacing:0.3px">60.72</div>
<div class="t" style="left:177px;width:120px;text-align:right;top:132px;font-size:12px;letter-spacing:0.3px">60.00</div>
<div class="t" style="left:277px;width:120px;text-align:right;top:132px;font-size:12px;letter-spacing:0.3px">56.88</div>
<div class="t" style="left:377px;width:120px;text-align:right;top:132px;font-size:12px;letter-spacing:0.3px">40.56</div>
<div class="t" style="left:477px;width:120px;text-align:right;top:132px;font-size:12px;letter-spacing:0.3px">38.64</div>
<div class="t" style="left:577px;width:120px;text-align:right;top:132px;font-size:12px;letter-spacing:0.3px">55.44</div>
<div class="t" style="left:-23px;width:120px;text-align:right;top:153px;font-size:12px;letter-spacing:0.3px">8.85</div>
<div class="t" style="left:77px;width:120px;text-align:right;top:153px;font-size:12px;letter-spacing:0.3px">14.10</div>
<div class="t" style="left:177px;width:120px;text-align:right;top:153px;font-size:12px;letter-spacing:0.3px">52.05</div>
<div class="t" style="left:277px;width:120px;text-align:right;top:153px;font-size:12px;letter-spacing:0.3px">109.20</div>
<div class="t" style="left:377px;width:120px;text-align:right;top:153px;font-size:12px;letter-spacing:0.3px">2.70</div>
<div class="t" style="left:477px;width:120px;text-align:right;top:153px;font-size:12px;letter-spacing:0.3px">2.55</div>
<div class="t" style="left:577px;width:120px;text-align:right;top:153px;font-size:12px;letter-spacing:0.3px">110.25</div>
<div class="t" style="left:-23px;width:120px;text-align:right;top:174px;font-size:12px;letter-spacing:0.3px">5.10</div>
<div class="t" style="left:77px;width:120px;text-align:right;top:174px;font-size:12px;letter-spacing:0.3px">9.30</div>
<div class="t" style="left:177px;width:120px;text-align:right;top:174px;font-size:12px;letter-spacing:0.3px">46.80</div>
<div class="t" style="left:277px;width:120px;text-align:right;top:174px;font-size:12px;letter-spacing:0.3px">59.25</div>
<div class="t" style="left:377px;width:120px;text-align:right;top:174px;font-size:12px;letter-spacing:0.3px">48.45</div>
<div class="t" style="left:477px;width:120px;text-align:right;top:174px;font-size:12px;letter-spacing:0.3px">12.75</div>
<div class="t" style="left:577px;width:120px;text-align:right;top:174px;font-size:12px;letter-spacing:0.3px">105.30</div>
<div class="t" style="left:-23px;width:120px;text-align:right;top:195px;font-size:12px;letter-spacing:0.3px">0.00</div>
<div class="t" style="left:77px;width:120px;text-align:right;top:195px;font-size:12px;letter-spacing:0.3px">0.00</div>
<div class="t" style="left:177px;width:120px;text-align:right;top:195px;font-size:12px;letter-spacing:0.3px">0.00</div>
<div class="t" style="left:277px;width:120px;text-align:right;top:195px;font-size:12px;letter-spacing:0.3px">0.00</div>
<div class="t" style="left:377px;width:120px;text-align:right;top:195px;font-size:12px;letter-spacing:0.3px">0.00</div>
<div class="t" style="left:477px;width:120px;text-align:right;top:195px;font-size:12px;letter-spacing:0.3px">0.00</div>
<div class="t" style="left:577px;width:120px;text-align:right;top:195px;font-size:12px;letter-spacing:0.3px">0.00</div>
<div class="t" style="left:-23px;width:120px;text-align:right;top:216px;font-size:12px;letter-spacing:0.3px">243.50</div>
<div class="t" style="left:77px;width:120px;text-align:right;top:216px;font-size:12px;letter-spacing:0.3px">222.38</div>
<div class="t" style="left:177px;width:120px;text-align:right;top:216px;font-size:12px;letter-spacing:0.3px">221.44</div>
<div class="t" style="left:277px;width:120px;text-align:right;top:216px;font-size:12px;letter-spacing:0.3px">214.06</div>
<div class="t" style="left:377px;width:120px;text-align:right;top:216px;font-size:12px;letter-spacing:0.3px">64.88</div>
<div class="t" style="left:477px;width:120px;text-align:right;top:216px;font-size:12px;letter-spacing:0.3px">39.88</div>
<div class="t" style="left:577px;width:120px;text-align:right;top:216px;font-size:12px;letter-spacing:0.3px">245.00</div>
<div class="t" style="left:-23px;width:120px;text-align:right;top:237px;font-size:12px;letter-spacing:0.3px">20.70</div>
<div class="t" style="left:77px;width:120px;text-align:right;top:237px;font-size:12px;letter-spacing:0.3px">20.55</div>
<div class="t" style="left:177px;width:120px;text-align:right;top:237px;font-size:12px;letter-spacing:0.3px">145.05</div>
<div class="t" style="left:277px;width:120px;text-align:right;top:237px;font-size:12px;letter-spacing:0.3px">175.50</div>
<div class="t" style="left:377px;width:120px;text-align:right;top:237px;font-size:12px;letter-spacing:0.3px">79.50</div>
<div class="t" style="left:477px;width:120px;text-align:right;top:237px;font-size:12px;letter-spacing:0.3px">15.40</div>
<div class="t" style="left:577px;width:120px;text-align:right;top:237px;font-size:12px;letter-spacing:0.3px">85.50</div>
<div class="t" style="left:-23px;width:120px;text-align:right;top:258px;font-size:12px;letter-spacing:0.3px">195.94</div>
<div class="t" style="left:77px;width:120px;text-align:right;top:258px;font-size:12px;letter-spacing:0.3px">195.84</div>
<div class="t" style="left:177px;width:120px;text-align:right;top:258px;font-size:12px;letter-spacing:0.3px">210.97</div>
<div class="t" style="left:277px;width:120px;text-align:right;top:258px;font-size:12px;letter-spacing:0.3px">224.19</div>
<div class="t" style="left:377px;width:120px;text-align:right;top:258px;font-size:12px;letter-spacing:0.3px">239.56</div>
<div class="t" style="left:477px;width:120px;text-align:right;top:258px;font-size:12px;letter-spacing:0.3px">328.38</div>
<div class="t" style="left:577px;width:120px;text-align:right;top:258px;font-size:12px;letter-spacing:0.3px">295.10</div>
<div class="t" style="left:-23px;width:120px;text-align:right;top:279px;font-size:12px;letter-spacing:0.3px">1,549.47</div>
<div class="t" style="left:77px;width:120px;text-align:right;top:279px;font-size:12px;letter-spacing:0.3px">1,608.97</div>
<div class="t" style="left:177px;width:120px;text-align:right;top:279px;font-size:12px;letter-spacing:0.3px">1,821.27</div>
<div class="t" style="left:277px;width:120px;text-align:right;top:279px;font-size:12px;letter-spacing:0.3px">2,077.58</div>
<div class="t" style="left:377px;width:120px;text-align:right;top:279px;font-size:12px;letter-spacing:0.3px">1,461.33</div>
<div class="t" style="left:477px;width:120px;text-align:right;top:279px;font-size:12px;letter-spacing:0.3px">1,390.88</div>
<div class="t" style="left:577px;width:120px;text-align:right;top:279px;font-size:12px;letter-spacing:0.3px">2,293.65</div>
</div>
<div class="a" style="left:767px;top:578px;width:670px;height:17px;background:#f0f0f0"></div>
<div class="a" style="left:784px;top:578px;width:131px;height:17px;background:#c8c8c8"></div>
<svg class="a" style="left:771px;top:582px" width="8" height="9" viewBox="0 0 8 9"><path d="M6 1 L2 4.5 L6 8" stroke="#606060" stroke-width="1.8" fill="none"/></svg>
<svg class="a" style="left:1424px;top:582px" width="8" height="9" viewBox="0 0 8 9"><path d="M2 1 L6 4.5 L2 8" stroke="#606060" stroke-width="1.8" fill="none"/></svg>
<svg class="a" style="left:932px;top:598px" width="10" height="8" viewBox="0 0 10 8"><path d="M1.5 1.2 L4.8 5.8 L8.1 1.2" stroke="#646464" stroke-width="2.3" fill="none"/></svg>
<div class="a" style="left:436px;top:608px;width:1002px;height:216px;border:1px solid #a0a0a0;background:#fff"></div>
<svg class="a" style="left:0;top:0" width="1440" height="900" viewBox="0 0 1440 900">
<rect x="479.5" y="619.5" width="942" height="128" fill="#fff" stroke="#a8a8a8" stroke-width="1"/>
<line x1="480" y1="721.5" x2="1421" y2="721.5" stroke="#dadada" stroke-width="1"/>
<line x1="474" y1="721.5" x2="480" y2="721.5" stroke="#a0a0a0" stroke-width="1"/>
<text x="467" y="725.5" font-size="11" text-anchor="end" fill="#333" font-family="Liberation Sans">300</text>
<line x1="480" y1="696.5" x2="1421" y2="696.5" stroke="#dadada" stroke-width="1"/>
<line x1="474" y1="696.5" x2="480" y2="696.5" stroke="#a0a0a0" stroke-width="1"/>
<text x="467" y="700.5" font-size="11" text-anchor="end" fill="#333" font-family="Liberation Sans">600</text>
<line x1="480" y1="670.5" x2="1421" y2="670.5" stroke="#dadada" stroke-width="1"/>
<line x1="474" y1="670.5" x2="480" y2="670.5" stroke="#a0a0a0" stroke-width="1"/>
<text x="467" y="674.5" font-size="11" text-anchor="end" fill="#333" font-family="Liberation Sans">900</text>
<line x1="480" y1="644.5" x2="1421" y2="644.5" stroke="#dadada" stroke-width="1"/>
<line x1="474" y1="644.5" x2="480" y2="644.5" stroke="#a0a0a0" stroke-width="1"/>
<text x="467" y="648.5" font-size="11" text-anchor="end" fill="#333" font-family="Liberation Sans">1200</text>
<text x="467" y="751.5" font-size="11" text-anchor="end" fill="#333" font-family="Liberation Sans">0</text>
<line x1="477" y1="738.5" x2="480" y2="738.5" stroke="#a0a0a0" stroke-width="1"/>
<line x1="477" y1="730.5" x2="480" y2="730.5" stroke="#a0a0a0" stroke-width="1"/>
<line x1="477" y1="713.5" x2="480" y2="713.5" stroke="#a0a0a0" stroke-width="1"/>
<line x1="477" y1="704.5" x2="480" y2="704.5" stroke="#a0a0a0" stroke-width="1"/>
<line x1="477" y1="687.5" x2="480" y2="687.5" stroke="#a0a0a0" stroke-width="1"/>
<line x1="477" y1="678.5" x2="480" y2="678.5" stroke="#a0a0a0" stroke-width="1"/>
<line x1="477" y1="661.5" x2="480" y2="661.5" stroke="#a0a0a0" stroke-width="1"/>
<line x1="477" y1="653.5" x2="480" y2="653.5" stroke="#a0a0a0" stroke-width="1"/>
<line x1="477" y1="635.5" x2="480" y2="635.5" stroke="#a0a0a0" stroke-width="1"/>
<line x1="477" y1="627.5" x2="480" y2="627.5" stroke="#a0a0a0" stroke-width="1"/>
<line x1="474" y1="747.5" x2="1421.5" y2="747.5" stroke="#a0a0a0" stroke-width="1"/>
<rect x="488.5" y="690.5" width="20" height="57.0" fill="#7acc38" stroke="#62a52f" stroke-width="1"/>
<line x1="498.5" y1="747.5" x2="498.5" y2="753" stroke="#a0a0a0" stroke-width="1"/>
<line x1="485.5" y1="747.5" x2="485.5" y2="750.5" stroke="#a0a0a0" stroke-width="1"/>
<line x1="492.5" y1="747.5" x2="492.5" y2="750.5" stroke="#a0a0a0" stroke-width="1"/>
<line x1="505.5" y1="747.5" x2="505.5" y2="750.5" stroke="#a0a0a0" stroke-width="1"/>
<line x1="512.5" y1="747.5" x2="512.5" y2="750.5" stroke="#a0a0a0" stroke-width="1"/>
<line x1="498.5" y1="680.5" x2="498.5" y2="690.5" stroke="#62a52f" stroke-width="1"/>
<rect x="482.5" y="665.5" width="32" height="15" fill="#fff" stroke="#6fae3f" stroke-width="1"/>
<text x="498.5" y="677.0" font-size="11" letter-spacing="0.3" text-anchor="middle" fill="#4e8028" font-family="Liberation Sans">667.2</text>
<text x="498.4" y="782" font-size="11" text-anchor="middle" fill="#333" font-family="Liberation Sans">2015/12/1</text>
<rect x="522.5" y="682.5" width="20" height="65.0" fill="#7acc38" stroke="#62a52f" stroke-width="1"/>
<line x1="532.5" y1="747.5" x2="532.5" y2="753" stroke="#a0a0a0" stroke-width="1"/>
<line x1="518.5" y1="747.5" x2="518.5" y2="750.5" stroke="#a0a0a0" stroke-width="1"/>
<line x1="525.5" y1="747.5" x2="525.5" y2="750.5" stroke="#a0a0a0" stroke-width="1"/>
<line x1="539.5" y1="747.5" x2="539.5" y2="750.5" stroke="#a0a0a0" stroke-width="1"/>
<line x1="545.5" y1="747.5" x2="545.5" y2="750.5" stroke="#a0a0a0" stroke-width="1"/>
<line x1="532.5" y1="672.5" x2="532.5" y2="682.5" stroke="#62a52f" stroke-width="1"/>
<rect x="516.5" y="657.5" width="32" height="15" fill="#fff" stroke="#6fae3f" stroke-width="1"/>
<text x="532.5" y="669.0" font-size="11" letter-spacing="0.3" text-anchor="middle" fill="#4e8028" font-family="Liberation Sans">756.0</text>
<text x="531.9" y="767" font-size="11" text-anchor="middle" fill="#333" font-family="Liberation Sans">2015/12/2</text>
<rect x="555.5" y="686.5" width="20" height="61.0" fill="#7acc38" stroke="#62a52f" stroke-width="1"/>
<line x1="565.5" y1="747.5" x2="565.5" y2="753" stroke="#a0a0a0" stroke-width="1"/>
<line x1="552.5" y1="747.5" x2="552.5" y2="750.5" stroke="#a0a0a0" stroke-width="1"/>
<line x1="559.5" y1="747.5" x2="559.5" y2="750.5" stroke="#a0a0a0" stroke-width="1"/>
<line x1="572.5" y1="747.5" x2="572.5" y2="750.5" stroke="#a0a0a0" stroke-width="1"/>
<line x1="579.5" y1="747.5" x2="579.5" y2="750.5" stroke="#a0a0a0" stroke-width="1"/>
<line x1="565.5" y1="676.5" x2="565.5" y2="686.5" stroke="#62a52f" stroke-width="1"/>
<rect x="549.5" y="661.5" width="32" height="15" fill="#fff" stroke="#6fae3f" stroke-width="1"/>
<text x="565.5" y="673.0" font-size="11" letter-spacing="0.3" text-anchor="middle" fill="#4e8028" font-family="Liberation Sans">716.4</text>
<text x="565.3" y="782" font-size="11" text-anchor="middle" fill="#333" font-family="Liberation Sans">2015/12/3</text>
<rect x="589.5" y="676.5" width="20" height="71.0" fill="#7acc38" stroke="#62a52f" stroke-width="1"/>
<line x1="599.5" y1="747.5" x2="599.5" y2="753" stroke="#a0a0a0" stroke-width="1"/>
<line x1="585.5" y1="747.5" x2="585.5" y2="750.5" stroke="#a0a0a0" stroke-width="1"/>
<line x1="592.5" y1="747.5" x2="592.5" y2="750.5" stroke="#a0a0a0" stroke-width="1"/>
<line x1="606.5" y1="747.5" x2="606.5" y2="750.5" stroke="#a0a0a0" stroke-width="1"/>
<line x1="612.5" y1="747.5" x2="612.5" y2="750.5" stroke="#a0a0a0" stroke-width="1"/>
<line x1="599.5" y1="666.5" x2="599.5" y2="676.5" stroke="#62a52f" stroke-width="1"/>
<rect x="583.5" y="651.5" width="32" height="15" fill="#fff" stroke="#6fae3f" stroke-width="1"/>
<text x="599.5" y="663.0" font-size="11" letter-spacing="0.3" text-anchor="middle" fill="#4e8028" font-family="Liberation Sans">831.6</text>
<text x="598.8" y="767" font-size="11" text-anchor="middle" fill="#333" font-family="Liberation Sans">2015/12/4</text>
<rect x="622.5" y="691.5" width="20" height="56.0" fill="#7acc38" stroke="#62a52f" stroke-width="1"/>
<line x1="632.5" y1="747.5" x2="632.5" y2="753" stroke="#a0a0a0" stroke-width="1"/>
<line x1="619.5" y1="747.5" x2="619.5" y2="750.5" stroke="#a0a0a0" stroke-width="1"/>
<line x1="626.5" y1="747.5" x2="626.5" y2="750.5" stroke="#a0a0a0" stroke-width="1"/>
<line x1="639.5" y1="747.5" x2="639.5" y2="750.5" stroke="#a0a0a0" stroke-width="1"/>
<line x1="646.5" y1="747.5" x2="646.5" y2="750.5" stroke="#a0a0a0" stroke-width="1"/>
<line x1="632.5" y1="681.5" x2="632.5" y2="691.5" stroke="#62a52f" stroke-width="1"/>
<rect x="616.5" y="666.5" width="32" height="15" fill="#fff" stroke="#6fae3f" stroke-width="1"/>
<text x="632.5" y="678.0" font-size="11" letter-spacing="0.3" text-anchor="middle" fill="#4e8028" font-family="Liberation Sans">650.4</text>
<text x="632.3" y="782" font-size="11" text-anchor="middle" fill="#333" font-family="Liberation Sans">2015/12/5</text>
<rect x="656.5" y="700.5" width="20" height="47.0" fill="#7acc38" stroke="#62a52f" stroke-width="1"/>
<line x1="666.5" y1="747.5" x2="666.5" y2="753" stroke="#a0a0a0" stroke-width="1"/>
<line x1="652.5" y1="747.5" x2="652.5" y2="750.5" stroke="#a0a0a0" stroke-width="1"/>
<line x1="659.5" y1="747.5" x2="659.5" y2="750.5" stroke="#a0a0a0" stroke-width="1"/>
<line x1="672.5" y1="747.5" x2="672.5" y2="750.5" stroke="#a0a0a0" stroke-width="1"/>
<line x1="679.5" y1="747.5" x2="679.5" y2="750.5" stroke="#a0a0a0" stroke-width="1"/>
<line x1="666.5" y1="690.5" x2="666.5" y2="700.5" stroke="#62a52f" stroke-width="1"/>
<rect x="650.5" y="675.5" width="32" height="15" fill="#fff" stroke="#6fae3f" stroke-width="1"/>
<text x="666.5" y="687.0" font-size="11" letter-spacing="0.3" text-anchor="middle" fill="#4e8028" font-family="Liberation Sans">549.6</text>
<text x="665.8" y="767" font-size="11" text-anchor="middle" fill="#333" font-family="Liberation Sans">2015/12/6</text>
<rect x="689.5" y="666.5" width="20" height="81.0" fill="#7acc38" stroke="#62a52f" stroke-width="1"/>
<line x1="699.5" y1="747.5" x2="699.5" y2="753" stroke="#a0a0a0" stroke-width="1"/>
<line x1="686.5" y1="747.5" x2="686.5" y2="750.5" stroke="#a0a0a0" stroke-width="1"/>
<line x1="693.5" y1="747.5" x2="693.5" y2="750.5" stroke="#a0a0a0" stroke-width="1"/>
<line x1="706.5" y1="747.5" x2="706.5" y2="750.5" stroke="#a0a0a0" stroke-width="1"/>
<line x1="713.5" y1="747.5" x2="713.5" y2="750.5" stroke="#a0a0a0" stroke-width="1"/>
<line x1="699.5" y1="656.5" x2="699.5" y2="666.5" stroke="#62a52f" stroke-width="1"/>
<rect x="683.5" y="641.5" width="32" height="15" fill="#fff" stroke="#6fae3f" stroke-width="1"/>
<text x="699.5" y="653.0" font-size="11" letter-spacing="0.3" text-anchor="middle" fill="#4e8028" font-family="Liberation Sans">943.3</text>
<text x="699.2" y="782" font-size="11" text-anchor="middle" fill="#333" font-family="Liberation Sans">2015/12/7</text>
<rect x="722.5" y="666.5" width="20" height="81.0" fill="#7acc38" stroke="#62a52f" stroke-width="1"/>
<line x1="733.5" y1="747.5" x2="733.5" y2="753" stroke="#a0a0a0" stroke-width="1"/>
<line x1="719.5" y1="747.5" x2="719.5" y2="750.5" stroke="#a0a0a0" stroke-width="1"/>
<line x1="726.5" y1="747.5" x2="726.5" y2="750.5" stroke="#a0a0a0" stroke-width="1"/>
<line x1="739.5" y1="747.5" x2="739.5" y2="750.5" stroke="#a0a0a0" stroke-width="1"/>
<line x1="746.5" y1="747.5" x2="746.5" y2="750.5" stroke="#a0a0a0" stroke-width="1"/>
<line x1="733.5" y1="656.5" x2="733.5" y2="666.5" stroke="#62a52f" stroke-width="1"/>
<rect x="717.5" y="641.5" width="32" height="15" fill="#fff" stroke="#6fae3f" stroke-width="1"/>
<text x="733.5" y="653.0" font-size="11" letter-spacing="0.3" text-anchor="middle" fill="#4e8028" font-family="Liberation Sans">942.0</text>
<text x="732.7" y="767" font-size="11" text-anchor="middle" fill="#333" font-family="Liberation Sans">2015/12/8</text>
<rect x="756.5" y="664.5" width="20" height="83.0" fill="#7acc38" stroke="#62a52f" stroke-width="1"/>
<line x1="766.5" y1="747.5" x2="766.5" y2="753" stroke="#a0a0a0" stroke-width="1"/>
<line x1="753.5" y1="747.5" x2="753.5" y2="750.5" stroke="#a0a0a0" stroke-width="1"/>
<line x1="759.5" y1="747.5" x2="759.5" y2="750.5" stroke="#a0a0a0" stroke-width="1"/>
<line x1="773.5" y1="747.5" x2="773.5" y2="750.5" stroke="#a0a0a0" stroke-width="1"/>
<line x1="780.5" y1="747.5" x2="780.5" y2="750.5" stroke="#a0a0a0" stroke-width="1"/>
<line x1="766.5" y1="654.5" x2="766.5" y2="664.5" stroke="#62a52f" stroke-width="1"/>
<rect x="750.5" y="639.5" width="32" height="15" fill="#fff" stroke="#6fae3f" stroke-width="1"/>
<text x="766.5" y="651.0" font-size="11" letter-spacing="0.3" text-anchor="middle" fill="#4e8028" font-family="Liberation Sans">962.4</text>
<text x="766.2" y="782" font-size="11" text-anchor="middle" fill="#333" font-family="Liberation Sans">2015/12/9</text>
<rect x="789.5" y="678.5" width="20" height="69.0" fill="#7acc38" stroke="#62a52f" stroke-width="1"/>
<line x1="800.5" y1="747.5" x2="800.5" y2="753" stroke="#a0a0a0" stroke-width="1"/>
<line x1="786.5" y1="747.5" x2="786.5" y2="750.5" stroke="#a0a0a0" stroke-width="1"/>
<line x1="793.5" y1="747.5" x2="793.5" y2="750.5" stroke="#a0a0a0" stroke-width="1"/>
<line x1="806.5" y1="747.5" x2="806.5" y2="750.5" stroke="#a0a0a0" stroke-width="1"/>
<line x1="813.5" y1="747.5" x2="813.5" y2="750.5" stroke="#a0a0a0" stroke-width="1"/>
<line x1="800.5" y1="668.5" x2="800.5" y2="678.5" stroke="#62a52f" stroke-width="1"/>
<rect x="784.5" y="653.5" width="32" height="15" fill="#fff" stroke="#6fae3f" stroke-width="1"/>
<text x="800.5" y="665.0" font-size="11" letter-spacing="0.3" text-anchor="middle" fill="#4e8028" font-family="Liberation Sans">803.7</text>
<text x="799.6" y="767" font-size="11" text-anchor="middle" fill="#333" font-family="Liberation Sans">2015/12/10</text>
<rect x="823.5" y="681.5" width="20" height="66.0" fill="#7acc38" stroke="#62a52f" stroke-width="1"/>
<line x1="833.5" y1="747.5" x2="833.5" y2="753" stroke="#a0a0a0" stroke-width="1"/>
<line x1="820.5" y1="747.5" x2="820.5" y2="750.5" stroke="#a0a0a0" stroke-width="1"/>
<line x1="826.5" y1="747.5" x2="826.5" y2="750.5" stroke="#a0a0a0" stroke-width="1"/>
<line x1="840.5" y1="747.5" x2="840.5" y2="750.5" stroke="#a0a0a0" stroke-width="1"/>
<line x1="846.5" y1="747.5" x2="846.5" y2="750.5" stroke="#a0a0a0" stroke-width="1"/>
<line x1="833.5" y1="671.5" x2="833.5" y2="681.5" stroke="#62a52f" stroke-width="1"/>
<rect x="817.5" y="656.5" width="32" height="15" fill="#fff" stroke="#6fae3f" stroke-width="1"/>
<text x="833.5" y="668.0" font-size="11" letter-spacing="0.3" text-anchor="middle" fill="#4e8028" font-family="Liberation Sans">765.9</text>
<text x="833.1" y="782" font-size="11" text-anchor="middle" fill="#333" font-family="Liberation Sans">2015/12/11</text>
<rect x="856.5" y="712.5" width="20" height="35.0" fill="#7acc38" stroke="#62a52f" stroke-width="1"/>
<line x1="867.5" y1="747.5" x2="867.5" y2="753" stroke="#a0a0a0" stroke-width="1"/>
<line x1="853.5" y1="747.5" x2="853.5" y2="750.5" stroke="#a0a0a0" stroke-width="1"/>
<line x1="860.5" y1="747.5" x2="860.5" y2="750.5" stroke="#a0a0a0" stroke-width="1"/>
<line x1="873.5" y1="747.5" x2="873.5" y2="750.5" stroke="#a0a0a0" stroke-width="1"/>
<line x1="880.5" y1="747.5" x2="880.5" y2="750.5" stroke="#a0a0a0" stroke-width="1"/>
<line x1="867.5" y1="702.5" x2="867.5" y2="712.5" stroke="#62a52f" stroke-width="1"/>
<rect x="851.5" y="687.5" width="32" height="15" fill="#fff" stroke="#6fae3f" stroke-width="1"/>
<text x="867.5" y="699.0" font-size="11" letter-spacing="0.3" text-anchor="middle" fill="#4e8028" font-family="Liberation Sans">412.8</text>
<text x="866.6" y="767" font-size="11" text-anchor="middle" fill="#333" font-family="Liberation Sans">2015/12/12</text>
<rect x="890.5" y="696.5" width="20" height="51.0" fill="#7acc38" stroke="#62a52f" stroke-width="1"/>
<line x1="900.5" y1="747.5" x2="900.5" y2="753" stroke="#a0a0a0" stroke-width="1"/>
<line x1="887.5" y1="747.5" x2="887.5" y2="750.5" stroke="#a0a0a0" stroke-width="1"/>
<line x1="893.5" y1="747.5" x2="893.5" y2="750.5" stroke="#a0a0a0" stroke-width="1"/>
<line x1="907.5" y1="747.5" x2="907.5" y2="750.5" stroke="#a0a0a0" stroke-width="1"/>
<line x1="913.5" y1="747.5" x2="913.5" y2="750.5" stroke="#a0a0a0" stroke-width="1"/>
<line x1="900.5" y1="686.5" x2="900.5" y2="696.5" stroke="#62a52f" stroke-width="1"/>
<rect x="884.5" y="671.5" width="32" height="15" fill="#fff" stroke="#6fae3f" stroke-width="1"/>
<text x="900.5" y="683.0" font-size="11" letter-spacing="0.3" text-anchor="middle" fill="#4e8028" font-family="Liberation Sans">597.6</text>
<text x="900.0" y="782" font-size="11" text-anchor="middle" fill="#333" font-family="Liberation Sans">2015/12/13</text>
<rect x="923.5" y="648.5" width="20" height="99.0" fill="#7acc38" stroke="#62a52f" stroke-width="1"/>
<line x1="934.5" y1="747.5" x2="934.5" y2="753" stroke="#a0a0a0" stroke-width="1"/>
<line x1="920.5" y1="747.5" x2="920.5" y2="750.5" stroke="#a0a0a0" stroke-width="1"/>
<line x1="927.5" y1="747.5" x2="927.5" y2="750.5" stroke="#a0a0a0" stroke-width="1"/>
<line x1="940.5" y1="747.5" x2="940.5" y2="750.5" stroke="#a0a0a0" stroke-width="1"/>
<line x1="947.5" y1="747.5" x2="947.5" y2="750.5" stroke="#a0a0a0" stroke-width="1"/>
<line x1="930.5" y1="638.5" x2="934.5" y2="648.5" stroke="#62a52f" stroke-width="1"/>
<rect x="911.5" y="623.5" width="38" height="15" fill="#fff" stroke="#6fae3f" stroke-width="1"/>
<text x="930.5" y="635.0" font-size="11" letter-spacing="0.3" text-anchor="middle" fill="#4e8028" font-family="Liberation Sans">1159.2</text>
<text x="933.5" y="767" font-size="11" text-anchor="middle" fill="#333" font-family="Liberation Sans">2015/12/14</text>
<rect x="957.5" y="642.5" width="20" height="105.0" fill="#7acc38" stroke="#62a52f" stroke-width="1"/>
<line x1="967.5" y1="747.5" x2="967.5" y2="753" stroke="#a0a0a0" stroke-width="1"/>
<line x1="954.5" y1="747.5" x2="954.5" y2="750.5" stroke="#a0a0a0" stroke-width="1"/>
<line x1="960.5" y1="747.5" x2="960.5" y2="750.5" stroke="#a0a0a0" stroke-width="1"/>
<line x1="974.5" y1="747.5" x2="974.5" y2="750.5" stroke="#a0a0a0" stroke-width="1"/>
<line x1="980.5" y1="747.5" x2="980.5" y2="750.5" stroke="#a0a0a0" stroke-width="1"/>
<line x1="967.5" y1="632.5" x2="967.5" y2="642.5" stroke="#62a52f" stroke-width="1"/>
<rect x="948.5" y="617.5" width="38" height="15" fill="#fff" stroke="#6fae3f" stroke-width="1"/>
<text x="967.5" y="629.0" font-size="11" letter-spacing="0.3" text-anchor="middle" fill="#4e8028" font-family="Liberation Sans">1219.2</text>
<text x="967.0" y="782" font-size="11" text-anchor="middle" fill="#333" font-family="Liberation Sans">2015/12/15</text>
<rect x="990.5" y="636.5" width="20" height="111.0" fill="#7acc38" stroke="#62a52f" stroke-width="1"/>
<line x1="1000.5" y1="747.5" x2="1000.5" y2="753" stroke="#a0a0a0" stroke-width="1"/>
<line x1="987.5" y1="747.5" x2="987.5" y2="750.5" stroke="#a0a0a0" stroke-width="1"/>
<line x1="994.5" y1="747.5" x2="994.5" y2="750.5" stroke="#a0a0a0" stroke-width="1"/>
<line x1="1007.5" y1="747.5" x2="1007.5" y2="750.5" stroke="#a0a0a0" stroke-width="1"/>
<line x1="1014.5" y1="747.5" x2="1014.5" y2="750.5" stroke="#a0a0a0" stroke-width="1"/>
<line x1="1006.5" y1="631.5" x2="1000.5" y2="636.5" stroke="#62a52f" stroke-width="1"/>
<rect x="987.5" y="616.5" width="38" height="15" fill="#fff" stroke="#6fae3f" stroke-width="1"/>
<text x="1006.5" y="628.0" font-size="11" letter-spacing="0.3" text-anchor="middle" fill="#4e8028" font-family="Liberation Sans">1294.8</text>
<text x="1000.4" y="767" font-size="11" text-anchor="middle" fill="#333" font-family="Liberation Sans">2015/12/16</text>
<rect x="1024.5" y="642.5" width="20" height="105.0" fill="#7acc38" stroke="#62a52f" stroke-width="1"/>
<line x1="1034.5" y1="747.5" x2="1034.5" y2="753" stroke="#a0a0a0" stroke-width="1"/>
<line x1="1021.5" y1="747.5" x2="1021.5" y2="750.5" stroke="#a0a0a0" stroke-width="1"/>
<line x1="1027.5" y1="747.5" x2="1027.5" y2="750.5" stroke="#a0a0a0" stroke-width="1"/>
<line x1="1041.5" y1="747.5" x2="1041.5" y2="750.5" stroke="#a0a0a0" stroke-width="1"/>
<line x1="1047.5" y1="747.5" x2="1047.5" y2="750.5" stroke="#a0a0a0" stroke-width="1"/>
<line x1="1044.5" y1="632.5" x2="1034.5" y2="642.5" stroke="#62a52f" stroke-width="1"/>
<rect x="1024.5" y="617.5" width="38" height="15" fill="#fff" stroke="#6fae3f" stroke-width="1"/>
<text x="1043.5" y="629.0" font-size="11" letter-spacing="0.3" text-anchor="middle" fill="#4e8028" font-family="Liberation Sans">1222.8</text>
<text x="1033.9" y="782" font-size="11" text-anchor="middle" fill="#333" font-family="Liberation Sans">2015/12/17</text>
<rect x="1057.5" y="645.5" width="20" height="102.0" fill="#7acc38" stroke="#62a52f" stroke-width="1"/>
<line x1="1067.5" y1="747.5" x2="1067.5" y2="753" stroke="#a0a0a0" stroke-width="1"/>
<line x1="1054.5" y1="747.5" x2="1054.5" y2="750.5" stroke="#a0a0a0" stroke-width="1"/>
<line x1="1061.5" y1="747.5" x2="1061.5" y2="750.5" stroke="#a0a0a0" stroke-width="1"/>
<line x1="1074.5" y1="747.5" x2="1074.5" y2="750.5" stroke="#a0a0a0" stroke-width="1"/>
<line x1="1081.5" y1="747.5" x2="1081.5" y2="750.5" stroke="#a0a0a0" stroke-width="1"/>
<line x1="1067.5" y1="647.5" x2="1067.5" y2="645.5" stroke="#62a52f" stroke-width="1"/>
<rect x="1049.5" y="632.5" width="38" height="15" fill="#fff" stroke="#6fae3f" stroke-width="1"/>
<text x="1068.5" y="644.0" font-size="11" letter-spacing="0.3" text-anchor="middle" fill="#4e8028" font-family="Liberation Sans">1191.6</text>
<text x="1067.4" y="767" font-size="11" text-anchor="middle" fill="#333" font-family="Liberation Sans">2015/12/18</text>
<rect x="1091.5" y="703.5" width="20" height="44.0" fill="#7acc38" stroke="#62a52f" stroke-width="1"/>
<line x1="1101.5" y1="747.5" x2="1101.5" y2="753" stroke="#a0a0a0" stroke-width="1"/>
<line x1="1087.5" y1="747.5" x2="1087.5" y2="750.5" stroke="#a0a0a0" stroke-width="1"/>
<line x1="1094.5" y1="747.5" x2="1094.5" y2="750.5" stroke="#a0a0a0" stroke-width="1"/>
<line x1="1108.5" y1="747.5" x2="1108.5" y2="750.5" stroke="#a0a0a0" stroke-width="1"/>
<line x1="1114.5" y1="747.5" x2="1114.5" y2="750.5" stroke="#a0a0a0" stroke-width="1"/>
<line x1="1101.5" y1="693.5" x2="1101.5" y2="703.5" stroke="#62a52f" stroke-width="1"/>
<rect x="1085.5" y="678.5" width="32" height="15" fill="#fff" stroke="#6fae3f" stroke-width="1"/>
<text x="1101.5" y="690.0" font-size="11" letter-spacing="0.3" text-anchor="middle" fill="#4e8028" font-family="Liberation Sans">508.8</text>
<text x="1100.9" y="782" font-size="11" text-anchor="middle" fill="#333" font-family="Liberation Sans">2015/12/19</text>
<rect x="1124.5" y="697.5" width="20" height="50.0" fill="#7acc38" stroke="#62a52f" stroke-width="1"/>
<line x1="1134.5" y1="747.5" x2="1134.5" y2="753" stroke="#a0a0a0" stroke-width="1"/>
<line x1="1121.5" y1="747.5" x2="1121.5" y2="750.5" stroke="#a0a0a0" stroke-width="1"/>
<line x1="1128.5" y1="747.5" x2="1128.5" y2="750.5" stroke="#a0a0a0" stroke-width="1"/>
<line x1="1141.5" y1="747.5" x2="1141.5" y2="750.5" stroke="#a0a0a0" stroke-width="1"/>
<line x1="1148.5" y1="747.5" x2="1148.5" y2="750.5" stroke="#a0a0a0" stroke-width="1"/>
<line x1="1134.5" y1="687.5" x2="1134.5" y2="697.5" stroke="#62a52f" stroke-width="1"/>
<rect x="1118.5" y="672.5" width="32" height="15" fill="#fff" stroke="#6fae3f" stroke-width="1"/>
<text x="1134.5" y="684.0" font-size="11" letter-spacing="0.3" text-anchor="middle" fill="#4e8028" font-family="Liberation Sans">584.4</text>
<text x="1134.3" y="767" font-size="11" text-anchor="middle" fill="#333" font-family="Liberation Sans">2015/12/20</text>
<rect x="1158.5" y="639.5" width="20" height="108.0" fill="#7acc38" stroke="#62a52f" stroke-width="1"/>
<line x1="1168.5" y1="747.5" x2="1168.5" y2="753" stroke="#a0a0a0" stroke-width="1"/>
<line x1="1154.5" y1="747.5" x2="1154.5" y2="750.5" stroke="#a0a0a0" stroke-width="1"/>
<line x1="1161.5" y1="747.5" x2="1161.5" y2="750.5" stroke="#a0a0a0" stroke-width="1"/>
<line x1="1174.5" y1="747.5" x2="1174.5" y2="750.5" stroke="#a0a0a0" stroke-width="1"/>
<line x1="1181.5" y1="747.5" x2="1181.5" y2="750.5" stroke="#a0a0a0" stroke-width="1"/>
<line x1="1168.5" y1="629.5" x2="1168.5" y2="639.5" stroke="#62a52f" stroke-width="1"/>
<rect x="1149.5" y="614.5" width="38" height="15" fill="#fff" stroke="#6fae3f" stroke-width="1"/>
<text x="1168.5" y="626.0" font-size="11" letter-spacing="0.3" text-anchor="middle" fill="#4e8028" font-family="Liberation Sans">1254.0</text>
<text x="1167.8" y="782" font-size="11" text-anchor="middle" fill="#333" font-family="Liberation Sans">2015/12/21</text>
<rect x="1191.5" y="643.5" width="20" height="104.0" fill="#7acc38" stroke="#62a52f" stroke-width="1"/>
<line x1="1201.5" y1="747.5" x2="1201.5" y2="753" stroke="#a0a0a0" stroke-width="1"/>
<line x1="1188.5" y1="747.5" x2="1188.5" y2="750.5" stroke="#a0a0a0" stroke-width="1"/>
<line x1="1195.5" y1="747.5" x2="1195.5" y2="750.5" stroke="#a0a0a0" stroke-width="1"/>
<line x1="1208.5" y1="747.5" x2="1208.5" y2="750.5" stroke="#a0a0a0" stroke-width="1"/>
<line x1="1215.5" y1="747.5" x2="1215.5" y2="750.5" stroke="#a0a0a0" stroke-width="1"/>
<line x1="1208.5" y1="633.5" x2="1201.5" y2="643.5" stroke="#62a52f" stroke-width="1"/>
<rect x="1188.5" y="618.5" width="38" height="15" fill="#fff" stroke="#6fae3f" stroke-width="1"/>
<text x="1207.5" y="630.0" font-size="11" letter-spacing="0.3" text-anchor="middle" fill="#4e8028" font-family="Liberation Sans">1208.4</text>
<text x="1201.3" y="767" font-size="11" text-anchor="middle" fill="#333" font-family="Liberation Sans">2015/12/22</text>
<rect x="1224.5" y="636.5" width="20" height="111.0" fill="#7acc38" stroke="#62a52f" stroke-width="1"/>
<line x1="1235.5" y1="747.5" x2="1235.5" y2="753" stroke="#a0a0a0" stroke-width="1"/>
<line x1="1221.5" y1="747.5" x2="1221.5" y2="750.5" stroke="#a0a0a0" stroke-width="1"/>
<line x1="1228.5" y1="747.5" x2="1228.5" y2="750.5" stroke="#a0a0a0" stroke-width="1"/>
<line x1="1241.5" y1="747.5" x2="1241.5" y2="750.5" stroke="#a0a0a0" stroke-width="1"/>
<line x1="1248.5" y1="747.5" x2="1248.5" y2="750.5" stroke="#a0a0a0" stroke-width="1"/>
<line x1="1244.5" y1="632.5" x2="1235.5" y2="636.5" stroke="#62a52f" stroke-width="1"/>
<rect x="1225.5" y="617.5" width="38" height="15" fill="#fff" stroke="#6fae3f" stroke-width="1"/>
<text x="1244.5" y="629.0" font-size="11" letter-spacing="0.3" text-anchor="middle" fill="#4e8028" font-family="Liberation Sans">1296.0</text>
<text x="1234.7" y="782" font-size="11" text-anchor="middle" fill="#333" font-family="Liberation Sans">2015/12/23</text>
<rect x="1258.5" y="631.5" width="20" height="116.0" fill="#7acc38" stroke="#62a52f" stroke-width="1"/>
<line x1="1268.5" y1="747.5" x2="1268.5" y2="753" stroke="#a0a0a0" stroke-width="1"/>
<line x1="1255.5" y1="747.5" x2="1255.5" y2="750.5" stroke="#a0a0a0" stroke-width="1"/>
<line x1="1262.5" y1="747.5" x2="1262.5" y2="750.5" stroke="#a0a0a0" stroke-width="1"/>
<line x1="1275.5" y1="747.5" x2="1275.5" y2="750.5" stroke="#a0a0a0" stroke-width="1"/>
<line x1="1282.5" y1="747.5" x2="1282.5" y2="750.5" stroke="#a0a0a0" stroke-width="1"/>
<line x1="1284.5" y1="629.5" x2="1268.5" y2="631.5" stroke="#62a52f" stroke-width="1"/>
<rect x="1264.5" y="614.5" width="38" height="15" fill="#fff" stroke="#6fae3f" stroke-width="1"/>
<text x="1283.5" y="626.0" font-size="11" letter-spacing="0.3" text-anchor="middle" fill="#4e8028" font-family="Liberation Sans">1357.2</text>
<text x="1268.2" y="767" font-size="11" text-anchor="middle" fill="#333" font-family="Liberation Sans">2015/12/24</text>
<rect x="1291.5" y="647.5" width="20" height="100.0" fill="#7acc38" stroke="#62a52f" stroke-width="1"/>
<line x1="1302.5" y1="747.5" x2="1302.5" y2="753" stroke="#a0a0a0" stroke-width="1"/>
<line x1="1288.5" y1="747.5" x2="1288.5" y2="750.5" stroke="#a0a0a0" stroke-width="1"/>
<line x1="1295.5" y1="747.5" x2="1295.5" y2="750.5" stroke="#a0a0a0" stroke-width="1"/>
<line x1="1308.5" y1="747.5" x2="1308.5" y2="750.5" stroke="#a0a0a0" stroke-width="1"/>
<line x1="1315.5" y1="747.5" x2="1315.5" y2="750.5" stroke="#a0a0a0" stroke-width="1"/>
<line x1="1302.5" y1="644.5" x2="1302.5" y2="647.5" stroke="#62a52f" stroke-width="1"/>
<rect x="1283.5" y="629.5" width="38" height="15" fill="#fff" stroke="#6fae3f" stroke-width="1"/>
<text x="1302.5" y="641.0" font-size="11" letter-spacing="0.3" text-anchor="middle" fill="#4e8028" font-family="Liberation Sans">1169.8</text>
<text x="1301.7" y="782" font-size="11" text-anchor="middle" fill="#333" font-family="Liberation Sans">2015/12/25</text>
<rect x="1325.5" y="664.5" width="20" height="83.0" fill="#7acc38" stroke="#62a52f" stroke-width="1"/>
<line x1="1335.5" y1="747.5" x2="1335.5" y2="753" stroke="#a0a0a0" stroke-width="1"/>
<line x1="1322.5" y1="747.5" x2="1322.5" y2="750.5" stroke="#a0a0a0" stroke-width="1"/>
<line x1="1328.5" y1="747.5" x2="1328.5" y2="750.5" stroke="#a0a0a0" stroke-width="1"/>
<line x1="1342.5" y1="747.5" x2="1342.5" y2="750.5" stroke="#a0a0a0" stroke-width="1"/>
<line x1="1349.5" y1="747.5" x2="1349.5" y2="750.5" stroke="#a0a0a0" stroke-width="1"/>
<line x1="1335.5" y1="654.5" x2="1335.5" y2="664.5" stroke="#62a52f" stroke-width="1"/>
<rect x="1320.5" y="639.5" width="32" height="15" fill="#fff" stroke="#6fae3f" stroke-width="1"/>
<text x="1336.5" y="651.0" font-size="11" letter-spacing="0.3" text-anchor="middle" fill="#4e8028" font-family="Liberation Sans">970.7</text>
<text x="1335.2" y="767" font-size="11" text-anchor="middle" fill="#333" font-family="Liberation Sans">2015/12/26</text>
<rect x="1358.5" y="664.5" width="20" height="83.0" fill="#7acc38" stroke="#62a52f" stroke-width="1"/>
<line x1="1369.5" y1="747.5" x2="1369.5" y2="753" stroke="#a0a0a0" stroke-width="1"/>
<line x1="1355.5" y1="747.5" x2="1355.5" y2="750.5" stroke="#a0a0a0" stroke-width="1"/>
<line x1="1362.5" y1="747.5" x2="1362.5" y2="750.5" stroke="#a0a0a0" stroke-width="1"/>
<line x1="1375.5" y1="747.5" x2="1375.5" y2="750.5" stroke="#a0a0a0" stroke-width="1"/>
<line x1="1382.5" y1="747.5" x2="1382.5" y2="750.5" stroke="#a0a0a0" stroke-width="1"/>
<line x1="1369.5" y1="654.5" x2="1369.5" y2="664.5" stroke="#62a52f" stroke-width="1"/>
<rect x="1353.5" y="639.5" width="32" height="15" fill="#fff" stroke="#6fae3f" stroke-width="1"/>
<text x="1369.5" y="651.0" font-size="11" letter-spacing="0.3" text-anchor="middle" fill="#4e8028" font-family="Liberation Sans">970.7</text>
<text x="1368.6" y="782" font-size="11" text-anchor="middle" fill="#333" font-family="Liberation Sans">2015/12/27</text>
<rect x="1392.5" y="668.5" width="20" height="79.0" fill="#7acc38" stroke="#62a52f" stroke-width="1"/>
<line x1="1402.5" y1="747.5" x2="1402.5" y2="753" stroke="#a0a0a0" stroke-width="1"/>
<line x1="1389.5" y1="747.5" x2="1389.5" y2="750.5" stroke="#a0a0a0" stroke-width="1"/>
<line x1="1395.5" y1="747.5" x2="1395.5" y2="750.5" stroke="#a0a0a0" stroke-width="1"/>
<line x1="1409.5" y1="747.5" x2="1409.5" y2="750.5" stroke="#a0a0a0" stroke-width="1"/>
<line x1="1415.5" y1="747.5" x2="1415.5" y2="750.5" stroke="#a0a0a0" stroke-width="1"/>
<line x1="1402.5" y1="658.5" x2="1402.5" y2="668.5" stroke="#62a52f" stroke-width="1"/>
<rect x="1386.5" y="643.5" width="32" height="15" fill="#fff" stroke="#6fae3f" stroke-width="1"/>
<text x="1402.5" y="655.0" font-size="11" letter-spacing="0.3" text-anchor="middle" fill="#4e8028" font-family="Liberation Sans">917.2</text>
<text x="1402.1" y="767" font-size="11" text-anchor="middle" fill="#333" font-family="Liberation Sans">2015/12/28</text>
<rect x="874.5" y="791.5" width="125" height="21" fill="#fff" stroke="#c8c8c8" stroke-width="1"/>
<rect x="878.5" y="795.5" width="17" height="13" fill="#7acc38" stroke="#62a52f" stroke-width="1"/>
<text x="900" y="806.5" font-size="12" fill="#222" font-family="Liberation Sans">电 | 进线 | 千瓦时</text>
</svg>
<svg class="a" style="left:758px;top:838px" width="34" height="34" viewBox="0 0 34 34">
<path d="M29.43 20.6 A13 13 0 1 1 26.96 8.44" fill="none" stroke="#666" stroke-width="6.4"/>
<path d="M33 0.8 L33 15.7 L18.2 13.4 Z" fill="#666"/></svg>
<div class="t" style="left:751px;top:875px;font-size:12px;color:#666">加载数据</div>
<svg class="a" style="left:838px;top:838px" width="34" height="34" viewBox="0 0 34 34">
<path d="M1 1 L15 1 L24.4 8.4 L24.4 32.6 L1 32.6 Z" fill="#666" stroke="#666" stroke-width="0.8" stroke-linejoin="round"/>
<path d="M15 16 L21 16 L21 10.5 L31 19.7 L21 28.8 L21 23.3 L15 23.3 Z" fill="#666" stroke="#f0f0f0" stroke-width="3.2" stroke-linejoin="round" paint-order="stroke"/></svg>
<div class="t" style="left:829px;top:875px;font-size:12px;color:#666">导出数据</div>
</body></html>
